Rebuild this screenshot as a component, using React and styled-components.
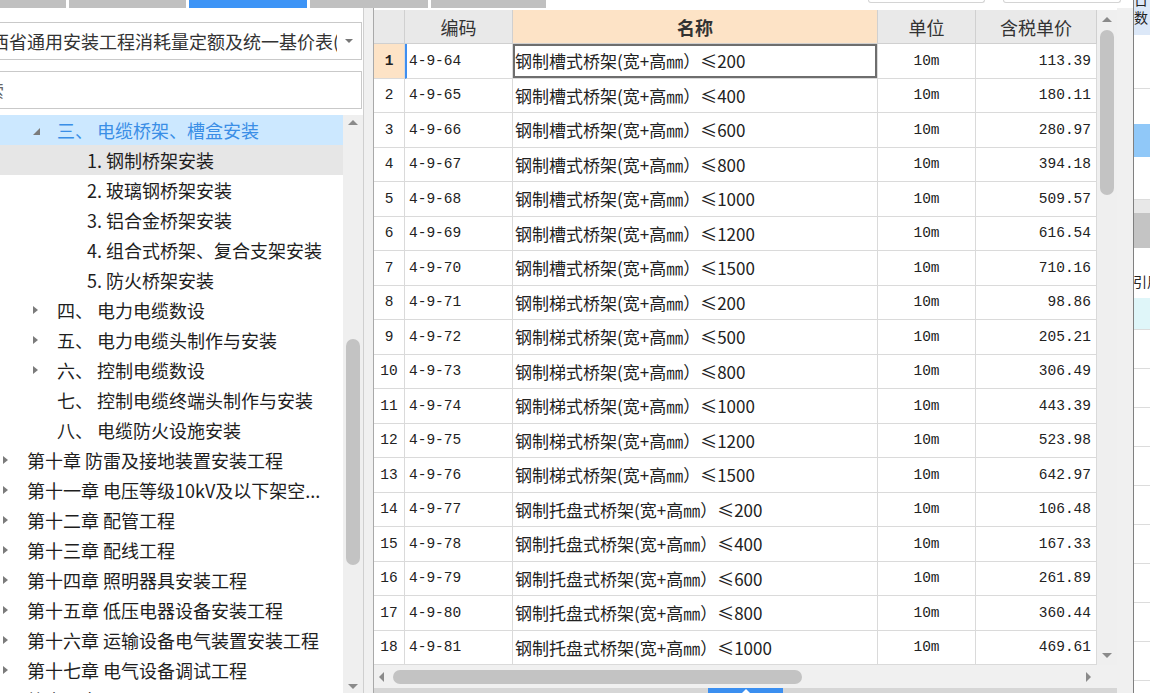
import React from 'react';
import styled, { createGlobalStyle, css } from 'styled-components';

const CJK = `'Noto Sans CJK SC', 'Noto Sans', sans-serif`;
const MONO = `'Liberation Mono', 'DejaVu Sans Mono', monospace`;

const GlobalStyle = createGlobalStyle`
  html, body { margin: 0; padding: 0; background: #fff; }
  body { font-family: ${CJK}; }
  * { box-sizing: border-box; }
`;

const Page = styled.div`
  width: 1150px;
  height: 693px;
  display: flex;
  overflow: hidden;
  background: #fff;
`;

const Main = styled.div`
  width: 1133px;
  display: flex;
  flex-direction: column;
`;

const TopStrip = styled.div`
  height: 8px;
  display: flex;
  gap: 3px;
  flex-shrink: 0;
`;

const Tab = styled.div`
  width: ${p => p.$w}px;
  height: 8px;
  background: ${p => (p.$active ? '#3d94f6' : '#c0c0c0')};
`;

const GhostGroup = styled.div`
  display: flex;
  gap: 18px;
  margin-left: 319px;
`;

const Ghost = styled.div`
  width: ${p => p.$w}px;
  height: 3px;
  border: 1px solid #d4d4d4;
  border-top: none;
  border-radius: 0 0 4px 4px;
`;

const Body = styled.div`
  flex: 1;
  display: flex;
  min-height: 0;
`;

/* ---------- left panel ---------- */

const LeftPanel = styled.div`
  width: 364px;
  background: #fff;
  border-right: 1px solid #cfcfcf;
  display: flex;
  flex-direction: column;
  padding-top: 14px;
  overflow: hidden;
`;

const Dropdown = styled.div`
  height: 38px;
  margin: 0 1px 0 -14px;
  border: 1px solid #c9c9c9;
  display: flex;
  align-items: center;
  padding-left: 4px;
  flex-shrink: 0;
`;

const DropText = styled.div`
  flex: 1;
  overflow: hidden;
  white-space: nowrap;
  font-size: 18px;
  color: #333;
`;

const DropArrow = styled.div`
  width: 24px;
  display: flex;
  justify-content: center;
  &::after {
    content: '';
    border-left: 4px solid transparent;
    border-right: 4px solid transparent;
    border-top: 4px solid #777;
  }
`;

const Search = styled.div`
  height: 38px;
  margin: 11px 1px 0 -14px;
  border: 1px solid #c9c9c9;
  display: flex;
  align-items: center;
  overflow: hidden;
  white-space: nowrap;
  flex-shrink: 0;
`;

const SearchText = styled.span`
  margin-left: -19px;
  font-size: 18px;
  color: #666;
`;

const Tree = styled.div`
  margin-top: 6px;
  flex: 1;
  display: flex;
  min-height: 0;
`;

const TreeList = styled.div`
  flex: 1;
  overflow: hidden;
`;

const TreeRow = styled.div`
  height: 30px;
  display: flex;
  align-items: center;
  padding-left: ${p => p.$level * 30}px;
  font-size: 18px;
  white-space: nowrap;
  color: ${p => (p.$selected ? '#3a8ee6' : '#1e1e1e')};
  background: ${p => (p.$selected ? '#cce8ff' : p.$hover ? '#e6e6e6' : '#fff')};
`;

const ArrowSlot = styled.div`
  width: 27px;
  flex-shrink: 0;
  display: flex;
  align-items: center;
`;

const Caret = styled.div`
  width: 0;
  height: 0;
  margin-left: 3px;
  ${p =>
    p.$open
      ? css`
          border-left: 7px solid transparent;
          border-bottom: 7px solid #7b7b7b;
          margin-top: 2px;
        `
      : css`
          border-top: 4.5px solid transparent;
          border-bottom: 4.5px solid transparent;
          border-left: 5px solid #7b7b7b;
        `}
`;

const ScrollV = styled.div`
  width: 20px;
  background: #efefef;
  display: flex;
  flex-direction: column;
  align-items: center;
  padding: ${p => p.$pad};
  flex-shrink: 0;
`;

const ArrowBox = styled.div`
  height: 8px;
  display: flex;
  align-items: center;
  justify-content: center;
  &::after {
    content: '';
    border-left: 5px solid transparent;
    border-right: 5px solid transparent;
    ${p =>
      p.$down
        ? css`border-top: 5px solid #8a8a8a;`
        : css`border-bottom: 5px solid #8a8a8a;`}
  }
`;

const ThumbV = styled.div`
  width: 14px;
  height: ${p => p.$h}px;
  margin-top: ${p => p.$top}px;
  border-radius: 7px;
  background: #c3c3c3;
`;

const Fill = styled.div`
  flex: 1;
`;

const Gutter = styled.div`
  width: ${p => (p.$grow ? 'auto' : '9px')};
  flex: ${p => (p.$grow ? 1 : 'none')};
  background: #f0f0f0;
`;

/* ---------- table panel ---------- */

const TablePanel = styled.div`
  width: 744px;
  border-left: 1px solid #a9a9a9;
  display: flex;
  flex-direction: column;
  padding-top: 2px;
  background: #fff;
`;

const GridWrap = styled.div`
  height: 655px;
  display: flex;
`;

const Grid = styled.div`
  width: 723px;
  display: grid;
  grid-template-columns: 31px 108px 365px 98px 121px;
  grid-template-rows: 34px repeat(18, 34.5px);
`;

const HeadCell = styled.div`
  display: flex;
  align-items: center;
  justify-content: center;
  font-size: 18px;
  color: #333;
  background: ${p => (p.$accent ? '#fde3c6' : '#e9e9e9')};
  font-weight: ${p => (p.$accent ? 700 : 400)};
  border-right: 1px solid #d0d0d0;
  border-bottom: 1px solid #d0d0d0;
`;

const Cell = styled.div`
  display: flex;
  align-items: center;
  white-space: nowrap;
  overflow: hidden;
  background: #fff;
  color: #222;
  font-family: ${MONO};
  font-size: 14.5px;
  border-right: 1px solid #dadada;
  border-bottom: 1px solid #dadada;
`;

const NumCell = styled(Cell)`
  justify-content: center;
  background: ${p => (p.$active ? '#fde3c6' : '#fff')};
  font-weight: ${p => (p.$active ? 700 : 400)};
`;

const CodeCell = styled(Cell)`
  padding-left: ${p => (p.$active ? 2 : 4)}px;
  border-left: ${p => (p.$active ? '2px solid #3e8ef0' : 'none')};
`;

const NameCell = styled(Cell)`
  font-family: ${CJK};
  font-size: 17px;
  padding-left: 2px;
  box-shadow: ${p => (p.$active ? 'inset 0 0 0 2px #6e6e6e' : 'none')};
`;

const UnitCell = styled(Cell)`
  justify-content: center;
`;

const PriceCell = styled(Cell)`
  justify-content: flex-end;
  padding-right: 5px;
`;

const HRow = styled.div`
  height: 23px;
  display: flex;
`;

const ScrollH = styled.div`
  width: 723px;
  background: #f0f0f0;
  display: flex;
  align-items: center;
`;

const ArrowH = styled.div`
  width: 0;
  height: 0;
  border-top: 5px solid transparent;
  border-bottom: 5px solid transparent;
  ${p =>
    p.$right
      ? css`
          border-left: 5px solid #8a8a8a;
          margin-right: 6px;
        `
      : css`
          border-right: 5px solid #8a8a8a;
          margin-left: 5px;
        `}
`;

const ThumbH = styled.div`
  width: 409px;
  height: 14px;
  margin-left: 9px;
  border-radius: 7px;
  background: #c3c3c3;
`;

const Corner = styled.div`
  flex: 1;
  background: #f0f0f0;
`;

const BottomStrip = styled.div`
  height: 5px;
  background: #d6d6d6;
  display: flex;
`;

const BlueTab = styled.div`
  width: 75px;
  margin-left: 334px;
  background: #3b8ff0;
  display: flex;
  justify-content: center;
  &::after {
    content: '';
    margin-top: 1px;
    border-left: 5px solid transparent;
    border-right: 5px solid transparent;
    border-bottom: 5px solid #fff;
  }
`;

/* ---------- right panel ---------- */

const RightPanel = styled.div`
  flex: 1;
  border-left: 1px solid #808080;
  display: flex;
  flex-direction: column;
  overflow: hidden;
  font-size: 14px;
  color: #222;
`;

const RBlock = styled.div`
  height: ${p => p.$h}px;
  flex-shrink: 0;
  background: ${p => p.$bg || '#fff'};
  border-bottom: ${p => (p.$line ? '1px solid #dcdcdc' : 'none')};
  white-space: nowrap;
  line-height: 15px;
  overflow: hidden;
`;

const RCut = styled.div`
  height: 7px;
  overflow: hidden;
  line-height: 15px;
  & > span {
    display: block;
    margin-top: -8px;
  }
`;

const RText = styled.div`
  margin-top: ${p => p.$top}px;
  margin-left: ${p => p.$left || 0}px;
`;

const rows = [
  ['4-9-64', '槽式', '200', '113.39'],
  ['4-9-65', '槽式', '400', '180.11'],
  ['4-9-66', '槽式', '600', '280.97'],
  ['4-9-67', '槽式', '800', '394.18'],
  ['4-9-68', '槽式', '1000', '509.57'],
  ['4-9-69', '槽式', '1200', '616.54'],
  ['4-9-70', '槽式', '1500', '710.16'],
  ['4-9-71', '梯式', '200', '98.86'],
  ['4-9-72', '梯式', '500', '205.21'],
  ['4-9-73', '梯式', '800', '306.49'],
  ['4-9-74', '梯式', '1000', '443.39'],
  ['4-9-75', '梯式', '1200', '523.98'],
  ['4-9-76', '梯式', '1500', '642.97'],
  ['4-9-77', '托盘式', '200', '106.48'],
  ['4-9-78', '托盘式', '400', '167.33'],
  ['4-9-79', '托盘式', '600', '261.89'],
  ['4-9-80', '托盘式', '800', '360.44'],
  ['4-9-81', '托盘式', '1000', '469.61'],
];

// level, label, arrow ('open' | 'closed' | null), state
const tree = [
  [1, '三、 电缆桥架、槽盒安装', 'open', 'selected'],
  [2, '1. 钢制桥架安装', null, 'hover'],
  [2, '2. 玻璃钢桥架安装'],
  [2, '3. 铝合金桥架安装'],
  [2, '4. 组合式桥架、复合支架安装'],
  [2, '5. 防火桥架安装'],
  [1, '四、 电力电缆数设', 'closed'],
  [1, '五、 电力电缆头制作与安装', 'closed'],
  [1, '六、 控制电缆数设', 'closed'],
  [1, '七、 控制电缆终端头制作与安装'],
  [1, '八、 电缆防火设施安装'],
  [0, '第十章 防雷及接地装置安装工程', 'closed'],
  [0, '第十一章 电压等级10kV及以下架空...', 'closed'],
  [0, '第十二章 配管工程', 'closed'],
  [0, '第十三章 配线工程', 'closed'],
  [0, '第十四章 照明器具安装工程', 'closed'],
  [0, '第十五章 低压电器设备安装工程', 'closed'],
  [0, '第十六章 运输设备电气装置安装工程', 'closed'],
  [0, '第十七章 电气设备调试工程', 'closed'],
  [0, '第十八章', 'closed'],
];

const tabs = [66, 117, 118, 118, 115];

export default function App() {
  return (
    <Page>
      <GlobalStyle />
      <Main>
        <TopStrip>
          {tabs.map((w, i) => (
            <Tab key={i} $w={w} $active={i === 2} />
          ))}
          <GhostGroup>
            <Ghost $w={117} />
            <Ghost $w={118} />
          </GhostGroup>
        </TopStrip>

        <Body>
          <LeftPanel>
            <Dropdown>
              <DropText>西省通用安装工程消耗量定额及统一基价表(</DropText>
              <DropArrow />
            </Dropdown>
            <Search>
              <SearchText>搜索</SearchText>
            </Search>
            <Tree>
              <TreeList>
                {tree.map(([level, label, arrow, state], i) => (
                  <TreeRow
                    key={i}
                    $level={level}
                    $selected={state === 'selected'}
                    $hover={state === 'hover'}
                  >
                    <ArrowSlot>{arrow && <Caret $open={arrow === 'open'} />}</ArrowSlot>
                    {label}
                  </TreeRow>
                ))}
              </TreeList>
              <ScrollV $pad="3px 0">
                <ArrowBox />
                <ThumbV $top={213} $h={226} />
                <Fill />
                <ArrowBox $down />
              </ScrollV>
            </Tree>
          </LeftPanel>

          <Gutter />

          <TablePanel>
            <GridWrap>
              <Grid>
                <HeadCell />
                <HeadCell>编码</HeadCell>
                <HeadCell $accent>名称</HeadCell>
                <HeadCell>单位</HeadCell>
                <HeadCell>含税单价</HeadCell>
                {rows.map(([code, kind, size, price], i) => {
                  const active = i === 0;
                  return (
                    <React.Fragment key={code}>
                      <NumCell $active={active}>{i + 1}</NumCell>
                      <CodeCell $active={active}>{code}</CodeCell>
                      <NameCell $active={active}>
                        钢制{kind}桥架(宽+高㎜）≤{size}
                      </NameCell>
                      <UnitCell>10m</UnitCell>
                      <PriceCell>{price}</PriceCell>
                    </React.Fragment>
                  );
                })}
              </Grid>
              <ScrollV $pad="5px 0 6px">
                <ArrowBox />
                <ThumbV $top={7} $h={165} />
                <Fill />
                <ArrowBox $down />
              </ScrollV>
            </GridWrap>
            <HRow>
              <ScrollH>
                <ArrowH />
                <ThumbH />
                <Fill />
                <ArrowH $right />
              </ScrollH>
              <Corner />
            </HRow>
            <BottomStrip>
              <BlueTab />
            </BottomStrip>
          </TablePanel>

          <Gutter $grow />
        </Body>
      </Main>

      <RightPanel>
        <RBlock $h={35} $bg="#dce8f8">
          <RCut>
            <span>日</span>
          </RCut>
          <RText $top={3}>数</RText>
        </RBlock>
        <RBlock $h={54} $line />
        <RBlock $h={35} />
        <RBlock $h={33} $bg="#90c8f8" />
        <RBlock $h={43} $line />
        <RBlock $h={13} $bg="#e8e8e8" />
        <RBlock $h={35} $bg="#c4c4c4" />
        <RBlock $h={50}>
          <RText $top={26} $left={-1}>引用</RText>
        </RBlock>
        <RBlock $h={32} $bg="#dff6f9" $line />
        {Array.from({ length: 10 }).map((_, i) => (
          <RBlock key={i} $h={39} $line />
        ))}
      </RightPanel>
    </Page>
  );
}
